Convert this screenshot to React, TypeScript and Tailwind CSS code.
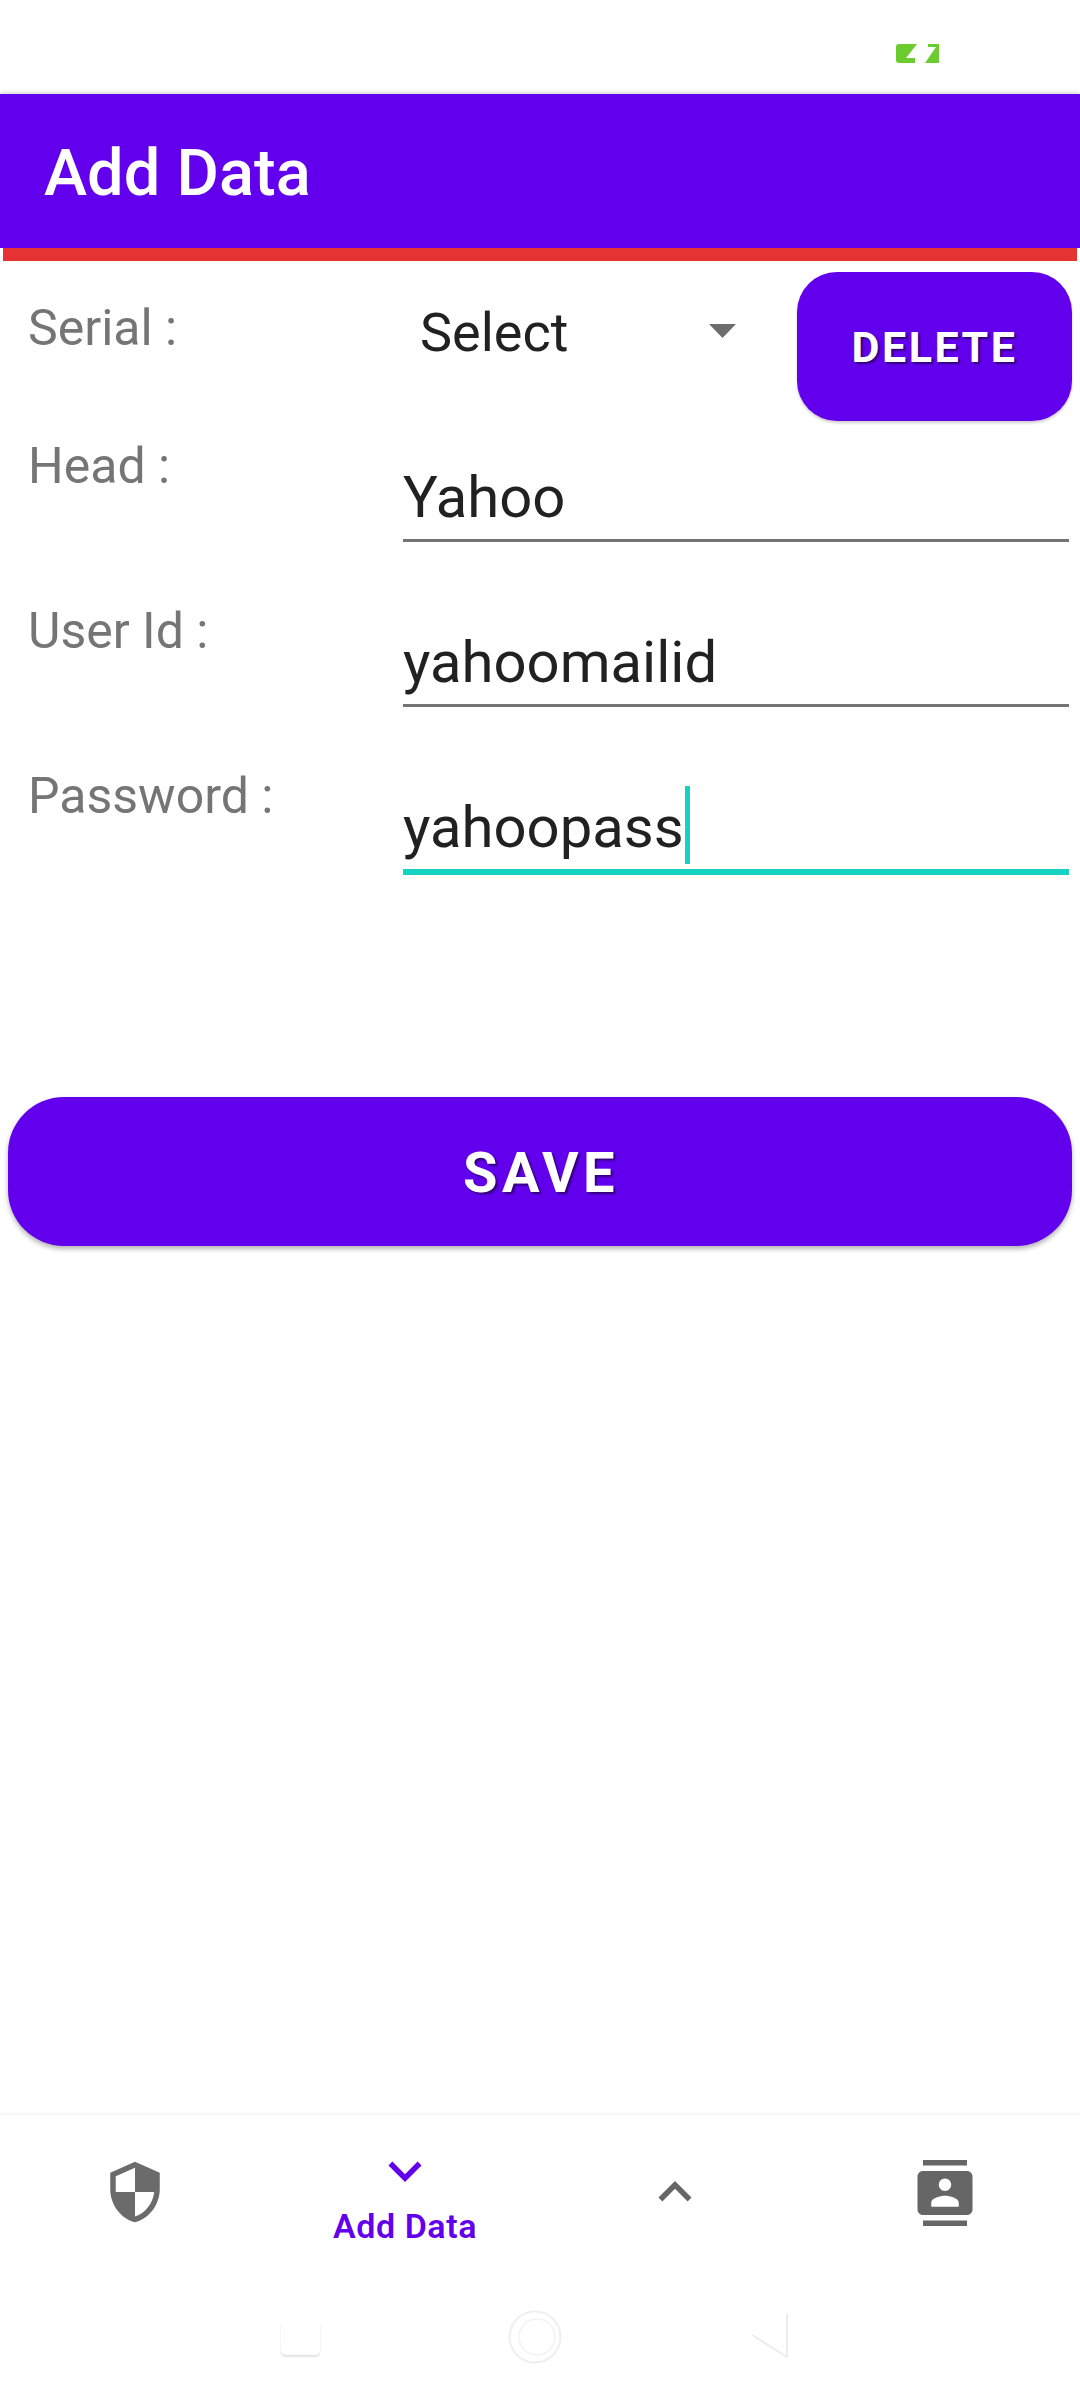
import React from 'react';

const PURPLE = 'bg-[#6200ee]';

const FormRow: React.FC<{ label: string; value: string; focused?: boolean; className?: string }> = ({ label, value, focused, className }) => (
  <div className={`flex h-[165px] ${className ?? ''}`}>
    <div className="w-[403px] shrink-0 pl-[28px] pt-[14px] text-[50px] leading-[59px] text-[#757575]">{label}</div>
    <div className="w-[666px] shrink-0 pt-[28px]">
      <div className={`flex items-center ${focused ? 'h-[94px] border-b-[6px] border-[#14d3c2]' : 'h-[91px] border-b-[3px] border-[#757575]'}`}>
        <span className="pt-[3px] text-[58px] leading-[68px] text-[#212121]">{value}</span>
        {focused && <span className="ml-[1px] h-[78px] w-[5px] bg-[#14d3c2]" />}
      </div>
    </div>
  </div>
);

const Icon: React.FC<{ d: string; color: string; className?: string }> = ({ d, color, className }) => (
  <svg viewBox="0 0 24 24" className={`h-[66px] w-[66px] ${className ?? ''}`} fill={color}>
    <path d={d} />
  </svg>
);

export default function App() {
  return (
    <div className="flex h-[2400px] w-[1080px] flex-col overflow-hidden bg-white font-['Roboto',sans-serif]">
      <div className="flex h-[94px] items-start justify-end pr-[141px] pt-[44px]">
        <svg viewBox="0 0 43 19" className="h-[19px] w-[43px]">
          <path d="M3 0H21L10 14H19V19H3Q0 19 0 16V3Q0 0 3 0Z" fill="#6bcb2f" />
          <path d="M32 0H43V19H29L40 3H32Z" fill="#6bcb2f" />
        </svg>
      </div>

      <header className={`flex h-[154px] items-center pl-[44px] pt-[4px] shadow-[0_-2px_4px_rgba(0,0,0,0.15)] ${PURPLE}`}>
        <h1 className="text-[65px] font-medium leading-none text-white">Add Data</h1>
      </header>
      <div className="mx-[3px] h-[13px] bg-[#e53232]" />

      <div className="flex h-[180px]">
        <div className="w-[403px] shrink-0 pl-[28px] pt-[38px] text-[50px] leading-[59px] text-[#757575]">Serial :</div>
        <div className="flex w-[394px] shrink-0 items-start pt-[40px]">
          <span className="ml-[17px] text-[54px] leading-[63px] text-[#212121]">Select</span>
          <svg viewBox="0 0 27 14" className="ml-[141px] mt-[23px] h-[14px] w-[27px]">
            <path d="M0 0H27L13.5 14Z" fill="#6d6d6d" />
          </svg>
        </div>
        <button className={`mt-[11px] flex h-[149px] w-[275px] items-center justify-center rounded-[40px] pt-[2px] text-[43px] font-bold tracking-[2.5px] text-white shadow-[0_2px_3px_rgba(0,0,0,0.2)] [text-shadow:2px_2px_2px_rgba(0,0,0,0.5)] ${PURPLE}`}>
          DELETE
        </button>
      </div>

      <FormRow label="Head :" value="Yahoo" className="-mt-[18px]" />
      <FormRow label="User Id :" value="yahoomailid" />
      <FormRow label="Password :" value="yahoopass" focused />

      <div className="px-[8px] pt-[179px]">
        <button className={`flex h-[149px] w-[1064px] items-center justify-center rounded-[56px] pl-[2px] pt-[3px] text-[56px] font-bold tracking-[4.5px] text-white shadow-[0_3px_5px_rgba(0,0,0,0.3)] [text-shadow:2px_2px_2px_rgba(0,0,0,0.5)] ${PURPLE}`}>
          SAVE
        </button>
      </div>

      <div className="flex-1" />

      <nav className="flex h-[285px] flex-col shadow-[0_-1px_3px_rgba(0,0,0,0.08)]">
        <div className="grid h-[190px] grid-cols-4">
          <div className="flex justify-center pt-[44px]">
            <Icon color="#6b6b6b" d="M12 1L3 5v6c0 5.55 3.84 10.74 9 12 5.16-1.26 9-6.45 9-12V5l-9-4zm0 10.99h7c-.53 4.12-3.28 7.79-7 8.94V12H5V6.3l7-3.11v8.8z" />
          </div>
          <div className="flex flex-col items-center pt-[23px]">
            <Icon color="#6200ee" d="M16.59 8.59L12 13.17 7.41 8.59 6 10l6 6 6-6z" />
            <span className="mt-[2px] text-[34px] font-semibold leading-[40px] tracking-[0.55px] text-[#6200ee]">Add Data</span>
          </div>
          <div className="flex justify-center pt-[44px]">
            <Icon color="#666666" d="M12 8l-6 6 1.41 1.41L12 10.83l4.59 4.58L18 14z" />
          </div>
          <div className="flex justify-center pt-[45px]">
            <Icon color="#666666" d="M20 0H4v2h16V0zM4 24h16v-2H4v2zM20 4H4c-1.1 0-2 .9-2 2v12c0 1.1.9 2 2 2h16c1.1 0 2-.9 2-2V6c0-1.1-.9-2-2-2zm-8 2.75c1.24 0 2.25 1.01 2.25 2.25s-1.01 2.25-2.25 2.25S9.75 10.24 9.75 9 10.76 6.75 12 6.75zM17 17H7v-1.5c0-1.67 3.33-2.5 5-2.5s5 .83 5 2.5V17z" />
          </div>
        </div>

        {/* system nav keys, white on white with just a faint edge */}
        <div className="flex h-[62px] items-center pl-[281px] pt-[2px]">
          <div className="h-[36px] w-[39px] rounded-[5px] bg-white shadow-[0_2px_2px_rgba(0,0,0,0.12)]" />
          <svg viewBox="0 0 56 56" className="ml-[187px] h-[56px] w-[56px]" fill="none">
            <circle cx="28" cy="28" r="25.5" stroke="#efefef" strokeWidth="2" />
            <circle cx="30" cy="28" r="18" stroke="#f3f3f3" strokeWidth="1.5" />
          </svg>
          <svg viewBox="0 0 40 48" className="ml-[187px] h-[48px] w-[40px]" fill="none">
            <path d="M2 22L37 44V1" stroke="#ededed" strokeWidth="2" strokeLinejoin="round" />
          </svg>
        </div>
      </nav>
    </div>
  );
}
